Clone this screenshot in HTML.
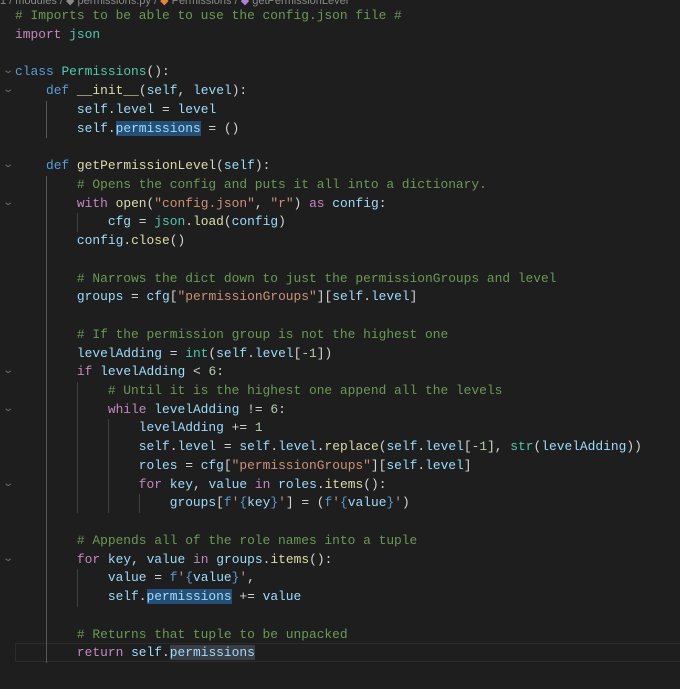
<!DOCTYPE html>
<html><head><meta charset="utf-8"><style>
html,body{margin:0;padding:0;background:#1e1e1e;width:680px;height:689px;overflow:hidden}
#ed{position:relative;width:680px;height:689px;font-family:"Liberation Mono",monospace;font-size:12.9px;}
.l{position:absolute;left:15px;height:18.74px;line-height:18.74px;white-space:pre;color:#d4d4d4}
.g{position:absolute;width:1px;background:#404040}
.f{position:absolute;left:4px;color:#6e6e6e;font-size:10px;font-family:"DejaVu Sans",sans-serif;transform:scaleX(1.4)}
.c{color:#6a9955}.k{color:#c586c0}.b{color:#569cd6}.t{color:#4ec9b0}.v{color:#9cdcfe}.fn{color:#dcdcaa}.s{color:#ce9178}.n{color:#b5cea8}.p{color:#d4d4d4}
.h{background:#264f78}.h2{background:#3a3d41}
#crumb{position:absolute;left:0;top:-6px;font-family:"Liberation Sans",sans-serif;font-size:11px;color:#8a8a8a;white-space:pre}
#cur{position:absolute;left:15px;right:0;top:643px;height:17px;border:1px solid #2c2c2c;border-right:none}
</style></head><body><div id="ed">
<div id="crumb">1 / modules / ◆ permissions.py / <span style="color:#e8833a">◆</span> Permissions / <span style="color:#b180d7">◆</span> getPermissionLevel</div>
<div id="cur"></div>
<div id="code"></div>
</div>
<script>
var L=[
[0,'<span class="c"># Imports to be able to use the config.json file #</span>'],
[0,'<span class="k">import</span> <span class="t">json</span>'],
[0,''],
[0,'<span class="b">class</span> <span class="t">Permissions</span>():',1],
[4,'<span class="b">def</span> <span class="fn">__init__</span>(<span class="v">self</span>, <span class="v">level</span>):',1],
[8,'<span class="v">self</span>.<span class="v">level</span> = <span class="v">level</span>'],
[8,'<span class="v">self</span>.<span class="v h">permissions</span> = ()'],
[0,''],
[4,'<span class="b">def</span> <span class="fn">getPermissionLevel</span>(<span class="v">self</span>):',1],
[8,'<span class="c"># Opens the config and puts it all into a dictionary.</span>'],
[8,'<span class="k">with</span> <span class="fn">open</span>(<span class="s">"config.json"</span>, <span class="s">"r"</span>) <span class="k">as</span> <span class="v">config</span>:',1],
[12,'<span class="v">cfg</span> = <span class="t">json</span>.<span class="fn">load</span>(<span class="v">config</span>)'],
[8,'<span class="v">config</span>.<span class="fn">close</span>()'],
[8,''],
[8,'<span class="c"># Narrows the dict down to just the permissionGroups and level</span>'],
[8,'<span class="v">groups</span> = <span class="v">cfg</span>[<span class="s">"permissionGroups"</span>][<span class="v">self</span>.<span class="v">level</span>]'],
[8,''],
[8,'<span class="c"># If the permission group is not the highest one</span>'],
[8,'<span class="v">levelAdding</span> = <span class="t">int</span>(<span class="v">self</span>.<span class="v">level</span>[<span class="n">-1</span>])'],
[8,'<span class="k">if</span> <span class="v">levelAdding</span> &lt; <span class="n">6</span>:',1],
[12,'<span class="c"># Until it is the highest one append all the levels</span>'],
[12,'<span class="k">while</span> <span class="v">levelAdding</span> != <span class="n">6</span>:',1],
[16,'<span class="v">levelAdding</span> += <span class="n">1</span>'],
[16,'<span class="v">self</span>.<span class="v">level</span> = <span class="v">self</span>.<span class="v">level</span>.<span class="fn">replace</span>(<span class="v">self</span>.<span class="v">level</span>[<span class="n">-1</span>], <span class="t">str</span>(<span class="v">levelAdding</span>))'],
[16,'<span class="v">roles</span> = <span class="v">cfg</span>[<span class="s">"permissionGroups"</span>][<span class="v">self</span>.<span class="v">level</span>]'],
[16,'<span class="k">for</span> <span class="v">key</span>, <span class="v">value</span> <span class="k">in</span> <span class="v">roles</span>.<span class="fn">items</span>():',1],
[20,'<span class="v">groups</span>[<span class="b">f</span><span class="s">\'</span><span class="b">{</span><span class="v">key</span><span class="b">}</span><span class="s">\'</span>] = (<span class="b">f</span><span class="s">\'</span><span class="b">{</span><span class="v">value</span><span class="b">}</span><span class="s">\'</span>)'],
[8,''],
[8,'<span class="c"># Appends all of the role names into a tuple</span>'],
[8,'<span class="k">for</span> <span class="v">key</span>, <span class="v">value</span> <span class="k">in</span> <span class="v">groups</span>.<span class="fn">items</span>():',1],
[12,'<span class="v">value</span> = <span class="b">f</span><span class="s">\'</span><span class="b">{</span><span class="v">value</span><span class="b">}</span><span class="s">\'</span>,'],
[12,'<span class="v">self</span>.<span class="v h">permissions</span> += <span class="v">value</span>'],
[8,''],
[8,'<span class="c"># Returns that tuple to be unpacked</span>'],
[8,'<span class="k">return</span> <span class="v">self</span>.<span class="v h2">permissions</span>']
];
var cw=7.75,lh=18.74,top0=7.2,h='';
L.forEach(function(r,i){
 var y=top0+i*lh, ind=r[0];
 for(var c=4;c<ind;c+=4){h+='<div class="g" style="left:'+(15+c*cw)+'px;top:'+y+'px;height:'+lh+'px;'+(c==4?'background:#585858':'')+'"></div>';}
 if(r[2])h+='<div class="f" style="top:'+(y+2)+'px">⌄</div>';
 h+='<div class="l" style="top:'+y+'px">'+' '.repeat(ind)+r[1]+'</div>';
});
document.getElementById('code').innerHTML=h;
</script>
</body></html>
